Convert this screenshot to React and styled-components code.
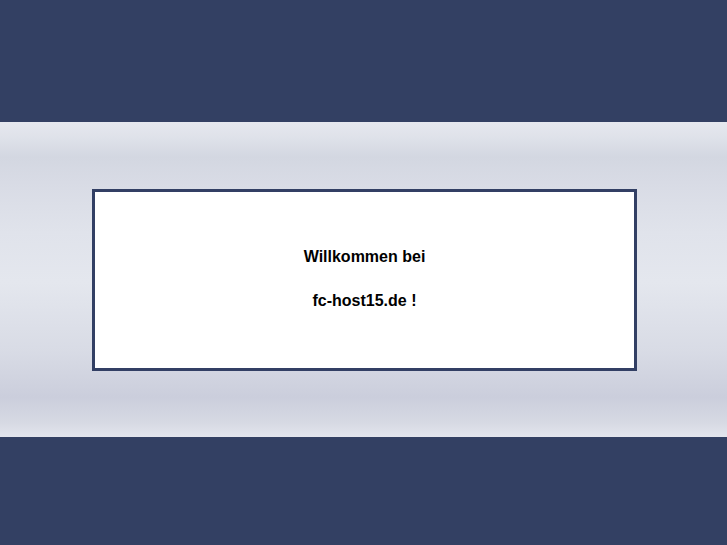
import React from "react";
import styled, { createGlobalStyle } from "styled-components";

const GlobalStyle = createGlobalStyle`
  html, body {
    margin: 0;
    padding: 0;
    background: #334063;
  }
  body {
    font-family: "Liberation Sans", Arial, sans-serif;
  }
`;

const Page = styled.div`
  display: flex;
  flex-direction: column;
  width: 100%;
  height: 545px;
  background: #334063;
`;

const Bar = styled.div`
  height: ${(p) => p.h}px;
  flex-shrink: 0;
  background: #334063;
`;

// hellgrauer Streifen mit weichem Verlauf
const Band = styled.div`
  height: 315px;
  flex-shrink: 0;
  display: flex;
  justify-content: center;
  padding: 67px 0 0 2px;
  box-sizing: border-box;
  background: linear-gradient(
    to bottom,
    #e6e8ef 0px,
    #dfe2ea 15px,
    #d3d7e1 35px,
    #d8dbe5 60px,
    #e0e3eb 110px,
    #e4e7ee 160px,
    #d8dbe5 230px,
    #cbcedc 275px,
    #d6d9e3 300px,
    #e3e5ed 315px
  );
`;

const Box = styled.div`
  width: 545px;
  height: 182px;
  box-sizing: border-box;
  border: 3px solid #323f64;
  background: #ffffff;
  display: flex;
  flex-direction: column;
  align-items: center;
  padding-top: 55px;
  gap: 24px;
`;

const Line = styled.div`
  font-size: 16px;
  font-weight: bold;
  line-height: 20px;
  color: #000000;
`;

export default function App() {
  return (
    <>
      <GlobalStyle />
      <Page>
        <Bar h={122} />
        <Band>
          <Box>
            <Line>Willkommen bei</Line>
            <Line>fc-host15.de !</Line>
          </Box>
        </Band>
        <Bar h={108} />
      </Page>
    </>
  );
}
